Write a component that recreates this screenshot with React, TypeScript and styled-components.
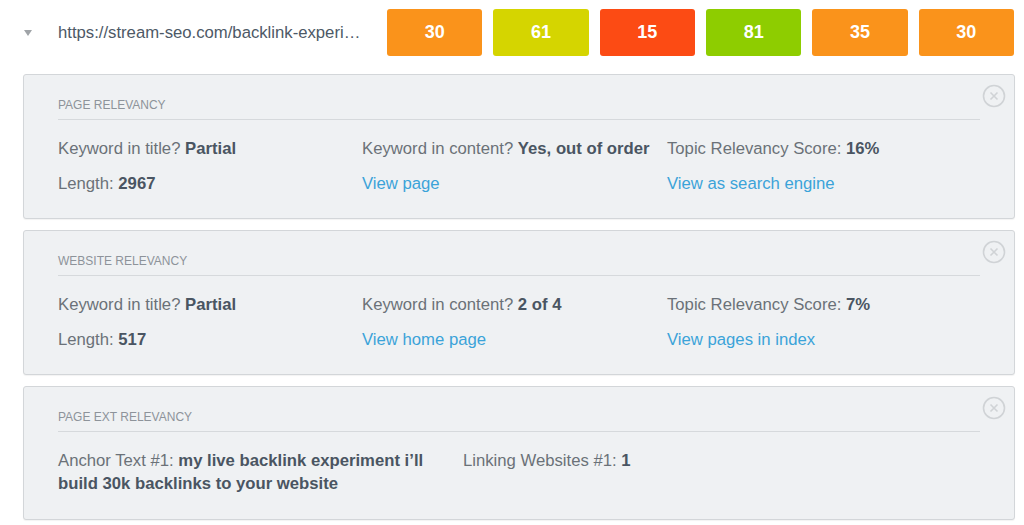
import React from 'react';
import styled, { createGlobalStyle } from 'styled-components';

const GlobalStyle = createGlobalStyle`
  body {
    margin: 0;
    background: #fff;
    font-family: 'Liberation Sans', Arial, sans-serif;
  }
`;

const Page = styled.div`
  width: 1024px;
  height: 525px;
  overflow: hidden;
  padding: 9px 10px 0 23px;
  box-sizing: border-box;
`;

const TopRow = styled.div`
  display: flex;
  align-items: center;
  height: 47px;
  margin-bottom: 18px;
`;

const Caret = styled.span`
  flex-shrink: 0;
  width: 0;
  height: 0;
  margin: 0 0 0 1px;
  border-left: 4px solid transparent;
  border-right: 4px solid transparent;
  border-top: 6px solid #a0a4a8;
`;

const Url = styled.div`
  flex-shrink: 0;
  width: 329px;
  padding-left: 26px;
  font-size: 16.7px;
  color: #4d5966;
  white-space: nowrap;
  overflow: hidden;
`;

const Scores = styled.div`
  flex: 1;
  display: flex;
  gap: 11px;
`;

const Score = styled.div<{ $bg: string }>`
  flex: 1;
  height: 47px;
  border-radius: 3px;
  background: ${(p) => p.$bg};
  color: #fff;
  font-weight: bold;
  font-size: 18px;
  display: flex;
  align-items: center;
  justify-content: center;
`;

const Panel = styled.section`
  position: relative;
  width: 992px;
  box-sizing: border-box;
  background: #eff1f3;
  border: 1px solid #d3d6d9;
  border-radius: 3px;
  box-shadow: 0 1px 1px rgba(0, 0, 0, 0.05);
  padding: 23px 34px 0 34px;
  margin-bottom: 11px;
`;

const PanelTitle = styled.h3`
  margin: 0;
  font-size: 12px;
  font-weight: normal;
  letter-spacing: 0;
  color: #8d939a;
  text-transform: uppercase;
  padding-bottom: 7px;
  border-bottom: 1px solid #d6d9dc;
`;

const Close = styled.button`
  position: absolute;
  top: 9px;
  right: 8px;
  width: 24px;
  height: 24px;
  padding: 0;
  border: none;
  background: none;
`;

const Grid = styled.div<{ $cols: string; $rowGap: number; $pb: number }>`
  display: grid;
  grid-template-columns: ${(p) => p.$cols};
  row-gap: ${(p) => p.$rowGap}px;
  padding: 17px 0 ${(p) => p.$pb}px;
  font-size: 16.7px;
  line-height: 23px;
  color: #6b7178;
`;

const Cell = styled.div`
  padding-right: 10px;
`;

const WideCell = styled(Cell)`
  padding-right: 22px;
`;

const Value = styled.b`
  color: #4a5562;
`;

const Link = styled.a`
  color: #3ba3d9;
  text-decoration: none;
`;

const CloseIcon = () => (
  <svg width="24" height="24" viewBox="0 0 24 24">
    <circle cx="12" cy="12" r="10.5" fill="none" stroke="#d0d3d6" strokeWidth="1.6" />
    <path d="M8.5 8.5 L15.5 15.5 M15.5 8.5 L8.5 15.5" stroke="#d0d3d6" strokeWidth="1.6" />
  </svg>
);

const scores = [
  { v: 30, c: '#fa931b' },
  { v: 61, c: '#d5d500' },
  { v: 15, c: '#fc4b14' },
  { v: 81, c: '#8ecd00' },
  { v: 35, c: '#fa931b' },
  { v: 30, c: '#fa931b' },
];

const App: React.FC = () => {
  return (
    <Page>
      <GlobalStyle />
      <TopRow>
        <Caret />
        <Url>https://stream-seo.com/backlink-experi…</Url>
        <Scores>
          {scores.map((s, i) => (
            <Score key={i} $bg={s.c}>{s.v}</Score>
          ))}
        </Scores>
      </TopRow>

      <Panel>
        <PanelTitle>Page Relevancy</PanelTitle>
        <Close><CloseIcon /></Close>
        <Grid $cols="304px 305px 1fr" $rowGap={12} $pb={23}>
          <Cell>Keyword in title? <Value>Partial</Value></Cell>
          <Cell>Keyword in content? <Value>Yes, out of order</Value></Cell>
          <Cell>Topic Relevancy Score: <Value>16%</Value></Cell>
          <Cell>Length: <Value>2967</Value></Cell>
          <Cell><Link href="#">View page</Link></Cell>
          <Cell><Link href="#">View as search engine</Link></Cell>
        </Grid>
      </Panel>

      <Panel>
        <PanelTitle>Website Relevancy</PanelTitle>
        <Close><CloseIcon /></Close>
        <Grid $cols="304px 305px 1fr" $rowGap={12} $pb={23}>
          <Cell>Keyword in title? <Value>Partial</Value></Cell>
          <Cell>Keyword in content? <Value>2 of 4</Value></Cell>
          <Cell>Topic Relevancy Score: <Value>7%</Value></Cell>
          <Cell>Length: <Value>517</Value></Cell>
          <Cell><Link href="#">View home page</Link></Cell>
          <Cell><Link href="#">View pages in index</Link></Cell>
        </Grid>
      </Panel>

      <Panel>
        <PanelTitle>Page Ext Relevancy</PanelTitle>
        <Close><CloseIcon /></Close>
        <Grid $cols="405px 1fr" $rowGap={0} $pb={24}>
          <WideCell>Anchor Text #1: <Value>my live backlink experiment i’ll build 30k backlinks to your website</Value></WideCell>
          <Cell>Linking Websites #1: <Value>1</Value></Cell>
        </Grid>
      </Panel>
    </Page>
  );
};

export default App;
